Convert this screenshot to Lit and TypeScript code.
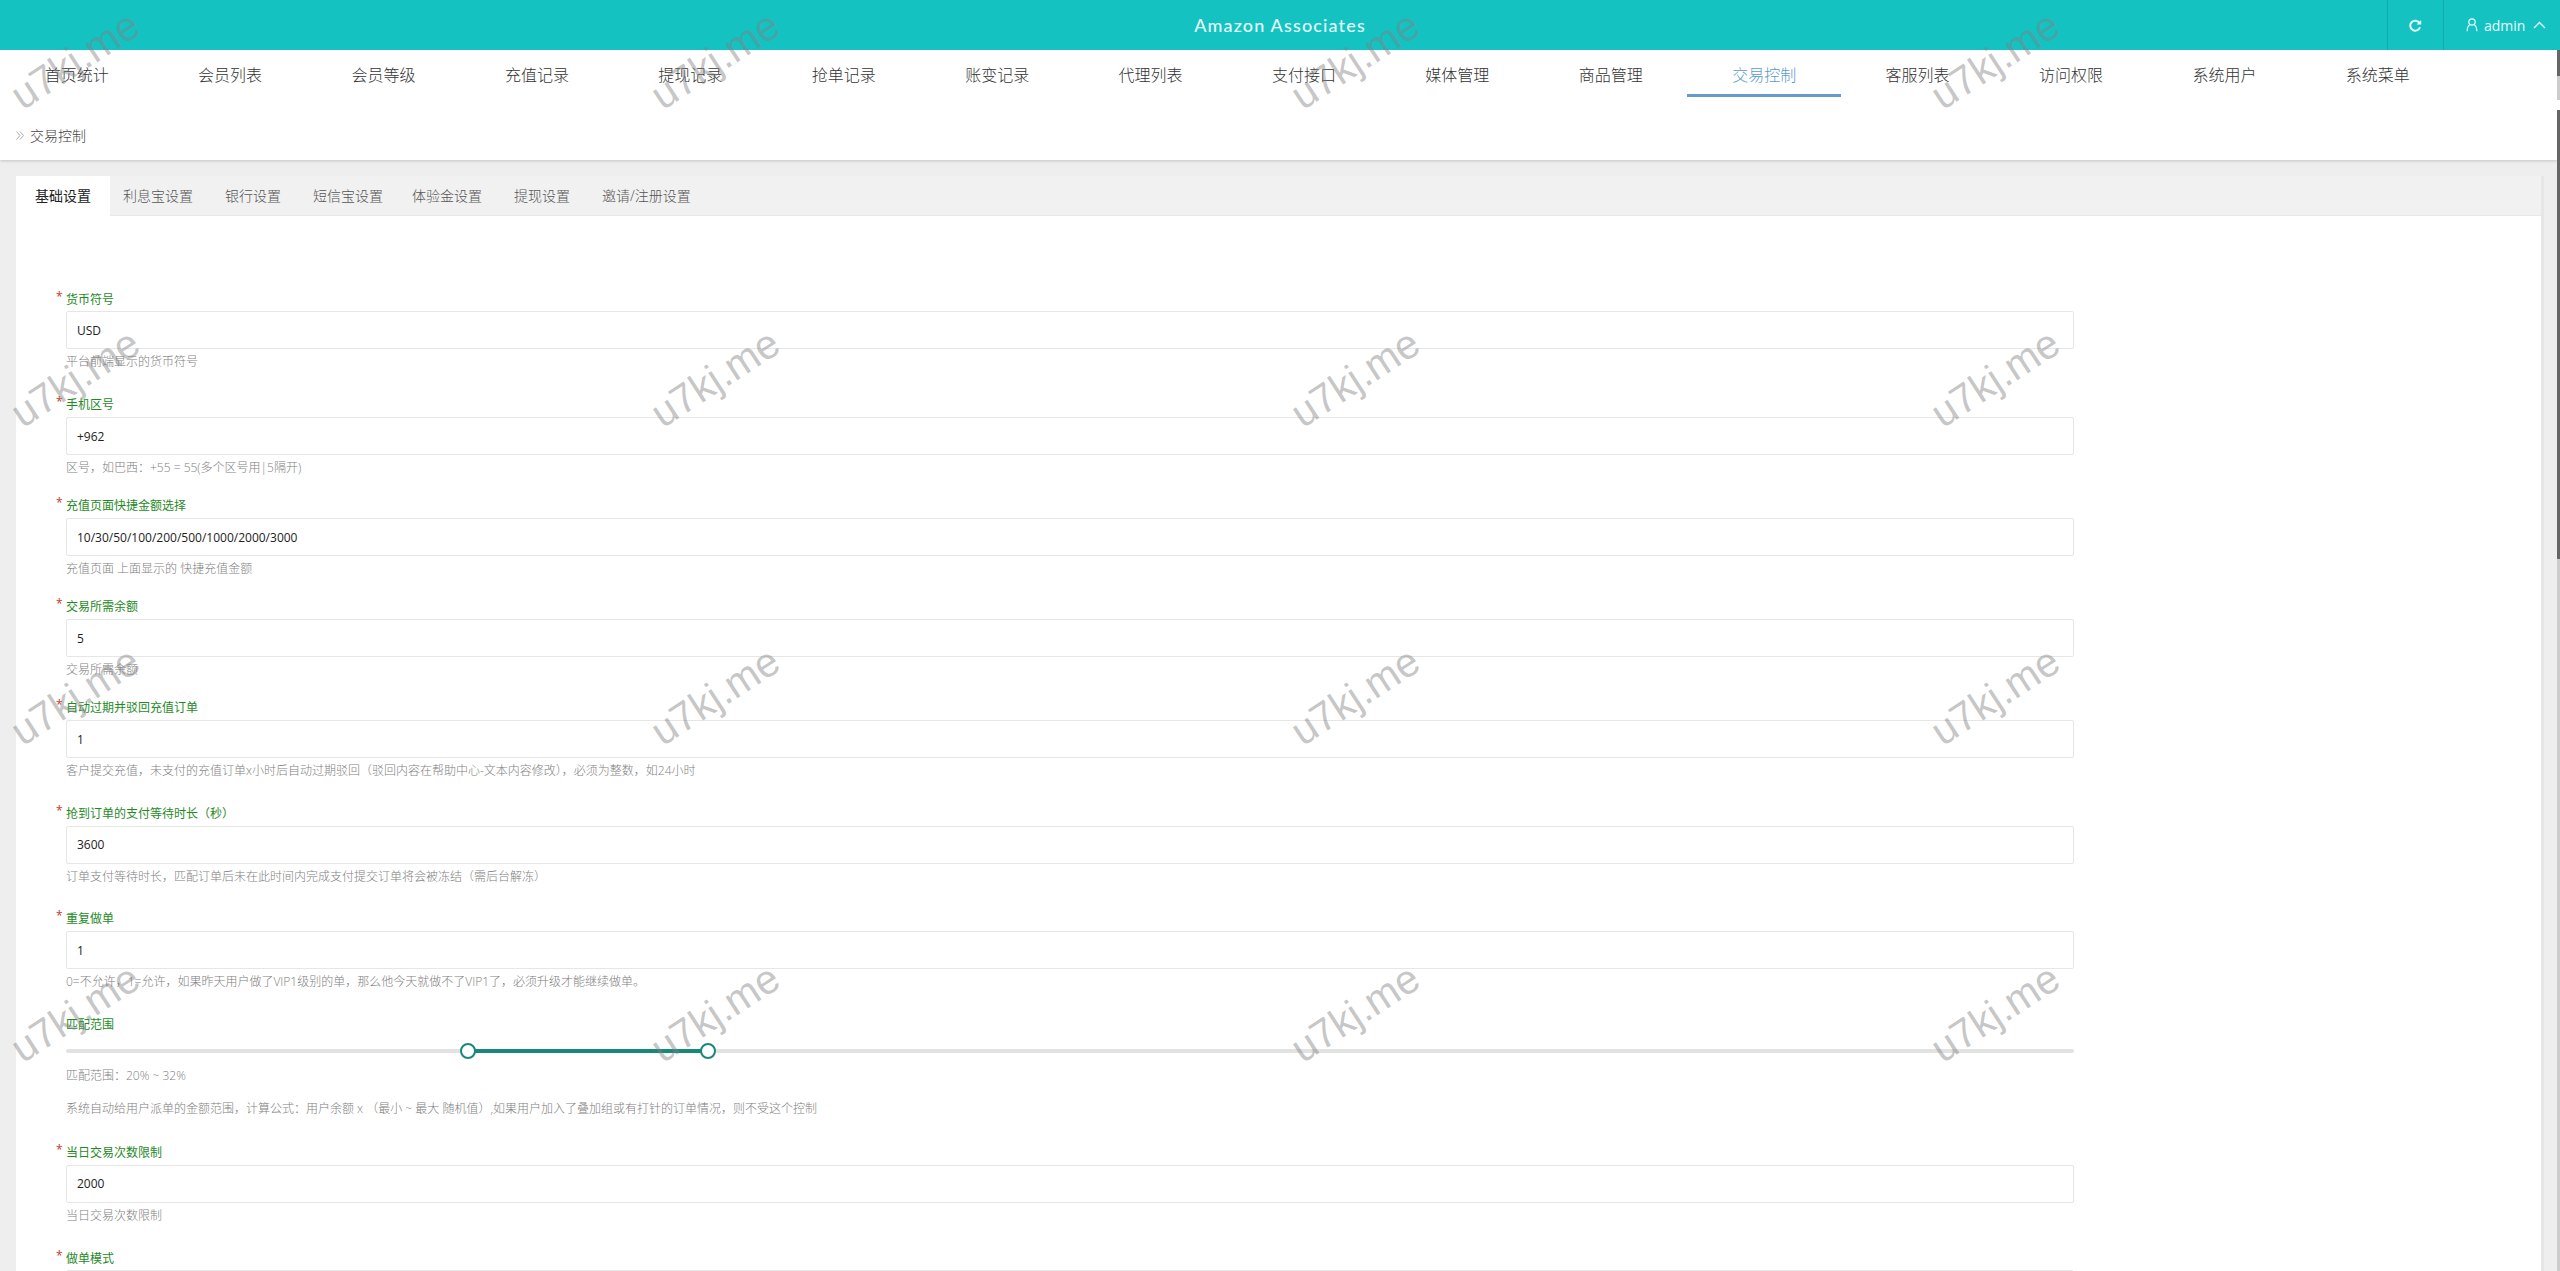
import { LitElement, html, css } from "lit";
import { customElement } from "lit/decorators.js";

const NAV = ["首页统计","会员列表","会员等级","充值记录","提现记录","抢单记录","账变记录","代理列表","支付接口","媒体管理","商品管理","交易控制","客服列表","访问权限","系统用户","系统菜单"];
const TABS = ["基础设置","利息宝设置","银行设置","短信宝设置","体验金设置","提现设置","邀请/注册设置"];

interface Field { label: string; value: string; help: string; loose: boolean; }
const BEFORE: Field[] = [
  { label: "货币符号", value: "USD", help: "平台前端显示的货币符号", loose: true },
  { label: "手机区号", value: "+962", help: "区号，如巴西：+55 = 55(多个区号用|5隔开)", loose: false },
  { label: "充值页面快捷金额选择", value: "10/30/50/100/200/500/1000/2000/3000", help: "充值页面 上面显示的 快捷充值金额", loose: false },
  { label: "交易所需余额", value: "5", help: "交易所需余额", loose: false },
  { label: "自动过期并驳回充值订单", value: "1", help: "客户提交充值，未支付的充值订单x小时后自动过期驳回（驳回内容在帮助中心-文本内容修改），必须为整数，如24小时", loose: true },
  { label: "抢到订单的支付等待时长（秒）", value: "3600", help: "订单支付等待时长，匹配订单后未在此时间内完成支付提交订单将会被冻结（需后台解冻）", loose: true },
  { label: "重复做单", value: "1", help: "0=不允许，1=允许，如果昨天用户做了VIP1级别的单，那么他今天就做不了VIP1了，必须升级才能继续做单。", loose: true },
];
const AFTER: Field[] = [
  { label: "当日交易次数限制", value: "2000", help: "当日交易次数限制", loose: true },
  { label: "做单模式", value: "", help: "", loose: false },
];
const RANGE = { min: 20, max: 32 };

@customElement("app-root")
export class AppRoot extends LitElement {
  static styles = css`
    :host {
      display: flex; flex-direction: column; height: 100vh; overflow: hidden; position: relative;
      font-family: "Open Sans", "Noto Sans CJK SC", sans-serif; background: #fff; color: #333;
    }
    .top {
      flex: none; height: 50px; background: #15c2c2; color: #e4fcfc;
      display: grid; grid-template-columns: 1fr auto 1fr; align-items: stretch;
    }
    .title {
      grid-column: 2; align-self: center; font-family: Lato, "Open Sans", sans-serif; font-size: 18px; font-weight: 500;
      letter-spacing: 1.15px; line-height: 50px;
    }
    .tools { grid-column: 3; display: flex; justify-content: flex-end; }
    .tool { display: flex; align-items: center; border-left: 1px solid #10abab; }
    .tool.refresh { width: 56px; justify-content: center; box-sizing: border-box; }
    .tool.user { width: 117px; box-sizing: border-box; padding-left: 22px; font-size: 14px; }
    .tool.user .name { margin: 0 8px 0 6px; }
    .top svg { display: block; }
    .rest { flex: 1; min-height: 0; display: flex; }
    .page { flex: 1; min-width: 0; display: flex; flex-direction: column; background: #eee; }
    .rail { flex: none; width: 3px; display: flex; flex-direction: column; background: #fff; }
    .thumb-a { height: 26px; background: #666; }
    .track-a { height: 24px; background: #ccc; }
    .rail-gap { height: 10px; }
    .thumb-b { height: 449px; background: #666; }
    .track-b { flex: 1; background: #ccc; }
    .nav { flex: none; height: 50px; background: #fff; display: flex; }
    .nav-item {
      width: 6%; height: 47px; box-sizing: border-box; text-align: center; font-size: 16px; font-weight: 300;
      line-height: 50px; color: #333; border-bottom: 3px solid transparent;
    }
    .nav-item.on { color: #5b9bc8; border-bottom-color: #6699cc; }
    .crumb {
      flex: none; height: 60px; box-sizing: border-box; background: #fff; display: flex; align-items: center; padding: 10px 0 0 16px;
      gap: 6px; font-size: 14px; font-weight: 300; color: #444; box-shadow: 0 1px 3px rgba(0,0,0,.18);
      clip-path: inset(0 0 -6px 0);
    }
    .main { flex: 1; min-height: 0; overflow: hidden; padding: 16px 13px 0 16px; }
    .card { background: #fff; border-right: 3px solid #e6e6e6; height: 100%; }
    .tabs { height: 40px; box-sizing: border-box; display: flex; background: #f1f1f1; border-bottom: 1px solid #e8e8e8; }
    .tab { padding: 0 16px; font-size: 14px; font-weight: 300; line-height: 40px; color: #555; white-space: nowrap; }
    .tab.on { background: #fff; color: #222; padding: 0 19px; margin-right: -3px; height: 40px; font-weight: 400; }
    .tab.tight { margin-right: -3px; }
    .form { width: 2017.6px; padding: 73.8px 0 0 40px; font-size: 12px; }
    .field { padding-left: 10px; margin-bottom: 18.3px; }
    .field.loose { margin-bottom: 22.9px; }
    .label { display: flex; margin-left: -10px; height: 20px; line-height: 20px; margin-bottom: 1.7px; color: #1f8a1f; font-weight: 400; }
    .star { width: 10px; color: #c0392b; line-height: 14px; font-size: 12px; }
    input {
      display: block; width: 100%; height: 38px; box-sizing: border-box; border: 1px solid #e6e6e6; border-radius: 2px;
      padding: 0 10px; font: 400 12px "Open Sans", "Noto Sans CJK SC", sans-serif; color: #222; background: #fff; outline: none;
    }
    .help { margin-top: 3px; height: 20px; line-height: 20px; color: #808080; font-weight: 300; white-space: nowrap; }
    .slider-field { padding-left: 10px; margin-bottom: 24.4px; }
    .slider { height: 28px; display: flex; align-items: center; }
    .track { width: 100%; height: 4px; background: #e2e2e2; border-radius: 2px; position: relative; }
    .bar { position: absolute; top: 0; bottom: 0; background: #16897b; }
    .handle {
      position: absolute; top: -6px; width: 16px; height: 16px; box-sizing: border-box; margin-left: -8px;
      border: 2px solid #16897b; border-radius: 50%; background: #fff;
    }
    .help.first { margin-top: 1px; }
    .help.second { margin-top: 13px; }
    .wm {
      position: absolute; inset: 0; display: grid; grid-template-columns: repeat(4, 640px); grid-template-rows: repeat(4, 25%);
      pointer-events: none; overflow: hidden;
    }
    .wm span {
      display: block; width: 160px; margin-left: -5px; height: 120px; line-height: 120px; text-align: center; white-space: nowrap;
      font-family: "Liberation Sans", sans-serif; font-size: 41px; color: rgba(128,128,128,.46); transform: rotate(-33deg);
    }
  `;

  private field(f: Field) {
    return html`<div class="field ${f.loose ? "loose" : ""}">
      <div class="label"><span class="star">*</span><span>${f.label}</span></div>
      <input readonly .value=${f.value} />
      ${f.help ? html`<div class="help">${f.help}</div>` : null}
    </div>`;
  }

  render() {
    return html`
      <header class="top">
        <div class="title">Amazon Associates</div>
        <div class="tools">
          <div class="tool refresh">
            <svg width="13" height="13" viewBox="0 0 13 13" fill="none" stroke="#e4fcfc" stroke-width="2">
              <path d="M10.6 4.2A5 5 0 1 0 11 8.2" />
              <path d="M12.2 1v4.6H7.6z" fill="#e4fcfc" stroke="none" />
            </svg>
          </div>
          <div class="tool user">
            <svg width="12" height="14" viewBox="0 0 12 14" fill="none" stroke="#e4fcfc" stroke-width="1.2">
              <circle cx="6" cy="4" r="3.2" />
              <path d="M3.6 6.8C2 8 1.2 10 1.2 13.2M8.4 6.8C10 8 10.8 10 10.8 13.2" />
            </svg>
            <span class="name">admin</span>
            <svg width="13" height="8" viewBox="0 0 13 8" fill="none" stroke="#e4fcfc" stroke-width="1.3">
              <path d="M1 7l5.5-5.5L12 7" />
            </svg>
          </div>
        </div>
      </header>
      <div class="rest">
        <div class="page">
          <nav class="nav">
            ${NAV.map((n) => html`<div class="nav-item ${n === "交易控制" ? "on" : ""}">${n}</div>`)}
          </nav>
          <div class="crumb">
            <svg width="8" height="9" viewBox="0 0 8 9" fill="none" stroke="#aaa" stroke-width="1">
              <path d="M.5.5l3.5 4-3.5 4M4 .5l3.5 4-3.5 4" />
            </svg>
            <span>交易控制</span>
          </div>
          <main class="main">
            <section class="card">
              <div class="tabs">
                ${TABS.map((t, i) => html`<div class="tab ${i === 0 ? "on" : ""} ${i === 3 ? "tight" : ""}">${t}</div>`)}
              </div>
              <div class="form">
                ${BEFORE.map((f) => this.field(f))}
                <div class="slider-field">
                  <div class="label"><span class="star"></span><span>匹配范围</span></div>
                  <div class="slider">
                    <div class="track">
                      <div class="bar" style="left:${RANGE.min}%;width:${RANGE.max - RANGE.min}%"></div>
                      <div class="handle" style="left:${RANGE.min}%"></div>
                      <div class="handle" style="left:${RANGE.max}%"></div>
                    </div>
                  </div>
                  <div class="help first">匹配范围：${RANGE.min}% ~ ${RANGE.max}%</div>
                  <div class="help second">系统自动给用户派单的金额范围，计算公式：用户余额 x （最小 ~ 最大 随机值）,如果用户加入了叠加组或有打针的订单情况，则不受这个控制</div>
                </div>
                ${AFTER.map((f) => this.field(f))}
              </div>
            </section>
          </main>
        </div>
        <div class="rail">
          <div class="thumb-a"></div><div class="track-a"></div><div class="rail-gap"></div>
          <div class="thumb-b"></div><div class="track-b"></div>
        </div>
      </div>
      <div class="wm" aria-hidden="true">
        ${Array.from({ length: 16 }).map(() => html`<div><span>u7kj.me</span></div>`)}
      </div>
    `;
  }
}
